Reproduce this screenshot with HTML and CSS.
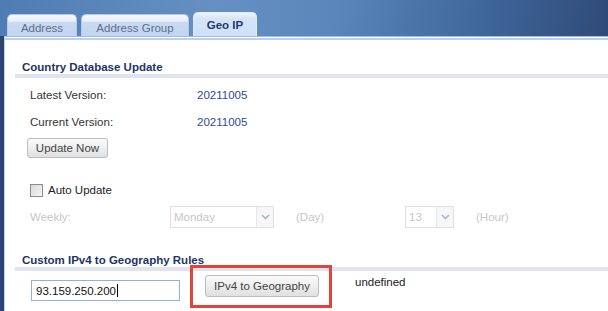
FILE: index.html
```html
<!DOCTYPE html>
<html lang="en">

<head>
    <meta charset="UTF-8">
    <meta name="viewport" content="width=device-width, initial-scale=1.0">
    <title>Geo IP</title>
    <link rel="stylesheet" href="styles.css">
</head>

<body>
    <div class="header">
        <div class="tabs">
            <div class="tab">Address</div>
            <div class="tab">Address Group</div>
            <div class="tab active">Geo IP</div>
        </div>
    </div>
    <div class="panel">
        <div class="section-title first">Country Database Update</div>
        <div class="row">
            <span class="label">Latest Version:</span>
            <span class="value">20211005</span>
        </div>
        <div class="row">
            <span class="label">Current Version:</span>
            <span class="value">20211005</span>
        </div>
        <button class="btn update">Update Now</button>

        <div class="check-row">
            <span class="checkbox"></span>
            <span>Auto Update</span>
        </div>

        <div class="row weekly">
            <span class="label wide">Weekly:</span>
            <div class="select day">
                <span class="select-text">Monday</span>
                <span class="arrow"><svg width="9" height="6" viewBox="0 0 9 6"><path d="M1 1 L4.5 4.5 L8 1" fill="none" stroke="#aab6c9" stroke-width="1.6"/></svg></span>
            </div>
            <span class="unit day-unit">(Day)</span>
            <div class="select hour">
                <span class="select-text">13</span>
                <span class="arrow"><svg width="9" height="6" viewBox="0 0 9 6"><path d="M1 1 L4.5 4.5 L8 1" fill="none" stroke="#aab6c9" stroke-width="1.6"/></svg></span>
            </div>
            <span class="unit">(Hour)</span>
        </div>

        <div class="section-title second">Custom IPv4 to Geography Rules</div>
        <div class="rule-row">
            <div class="ip-input">93.159.250.200<span class="caret"></span></div>
            <div class="highlight">
                <button class="btn geo">IPv4 to Geography</button>
            </div>
            <span class="result">undefined</span>
        </div>
    </div>
</body>

</html>
```

FILE: styles.css
```css
body {
    margin: 0;
    padding: 0;
    height: 311px;
    overflow: hidden;
    font-family: 'Liberation Sans', Arial, sans-serif;
    font-size: 11.5px;
    color: #333;
    background: #2b4472;
    display: flex;
    flex-direction: column;
}

.header {
    height: 36px;
    background: linear-gradient(100deg, #4f7cb2 0%, #6690c2 35%, #5a86bb 55%, #40689c 78%, #2f4a78 100%);
}

.tabs {
    display: flex;
    align-items: flex-end;
    gap: 4px;
    height: 36px;
    padding-left: 7px;
}

.tab {
    height: 22px;
    box-sizing: border-box;
    display: flex;
    align-items: center;
    justify-content: center;
    white-space: nowrap;
    padding-top: 5px;
    color: #5d6e8c;
    border: 1px solid #b3c9ea;
    border-bottom: none;
    border-radius: 5px 5px 0 0;
    background: linear-gradient(#f5f8fd 0%, #e8eff9 30%, #c9daf2 34%, #c1d4f0 100%);
}

.tab:nth-child(1) {
    width: 70px;
}

.tab:nth-child(2) {
    width: 108px;
}

.tab.active {
    width: 64px;
    height: 24px;
    padding-top: 1px;
    font-weight: bold;
    color: #1f3a6b;
    border-color: #e2ebf8;
    background: linear-gradient(#eef4fc 0%, #d5e4f8 25%, #cfe0f7 100%);
}

.panel {
    flex: 1;
    margin-left: 4px;
    background: #fff;
    border-top: 1px solid #9fbde6;
    border-left: 1px solid #b9cfee;
    box-shadow: inset 0 1px #fff, inset 0 3px #b9d0f1;
    padding: 23px 0 0 10px;
    display: flex;
    flex-direction: column;
    align-items: flex-start;
}

.section-title {
    align-self: stretch;
    font-weight: bold;
    color: #1d3566;
    line-height: 14px;
    padding-left: 7px;
    border-bottom: 4px solid #dfe4ee;
}

.section-title.second {
    margin-top: 25px;
}

.row {
    display: flex;
    align-items: center;
    height: 27px;
    padding-left: 15px;
}

.row:nth-of-type(2) {
    margin-top: 3px;
}

.label {
    width: 167px;
}

.value {
    color: #2b4b9b;
}

.btn {
    font-family: 'Liberation Sans', Arial, sans-serif;
    font-size: 11.5px;
    color: #444;
    border: 1px solid #bcbcbc;
    border-radius: 3px;
    background: linear-gradient(#fbfbfb 0%, #eeeeee 50%, #e0e0e0 100%);
    padding: 0;
    cursor: pointer;
}

.update {
    margin: 3px 0 0 12px;
    width: 81px;
    height: 20px;
}

.check-row {
    display: flex;
    align-items: center;
    gap: 5px;
    height: 20px;
    margin-top: 22px;
    padding-left: 15px;
    color: #222;
}

.checkbox {
    width: 11px;
    height: 11px;
    border: 1px solid #8b8b8b;
    background: linear-gradient(135deg, #d9d9d9, #f6f6f6);
}

.weekly {
    margin-top: 6px;
    height: 22px;
    color: #c6c6c6;
}

.label.wide {
    width: 140px;
}

.select {
    display: flex;
    height: 22px;
    box-sizing: border-box;
    border: 1px solid #e0e0e0;
    color: #c6c6c6;
}

.select-text {
    flex: 1;
    display: flex;
    align-items: center;
    padding-left: 3px;
}

.arrow {
    width: 16px;
    display: flex;
    align-items: center;
    justify-content: center;
    border-left: 1px solid #e6e6e6;
    background: #f7f7f7;
}

.select.day {
    width: 104px;
}

.select.hour {
    width: 49px;
}

.unit {
    margin-left: 22px;
}

.unit.day-unit {
    width: 109px;
}

.rule-row {
    display: flex;
    align-items: flex-start;
    margin-top: 9px;
    padding-left: 16px;
}

.ip-input {
    width: 149px;
    height: 21px;
    box-sizing: border-box;
    border: 1px solid #8fb2dc;
    display: flex;
    align-items: center;
    padding-left: 4px;
    color: #111;
}

.caret {
    width: 1px;
    height: 13px;
    background: #000;
    margin-left: 1px;
}

.highlight {
    position: relative;
    margin-left: 25px;
    margin-top: -5px;
}

.highlight::after {
    content: '';
    position: absolute;
    left: -15px;
    top: -10px;
    right: -13px;
    bottom: -11px;
    border: 3px solid #e2443c;
}

.geo {
    display: block;
    width: 114px;
    height: 22px;
}

.result {
    margin-left: 36px;
    margin-top: -5px;
    line-height: 14px;
    color: #222;
}
```
